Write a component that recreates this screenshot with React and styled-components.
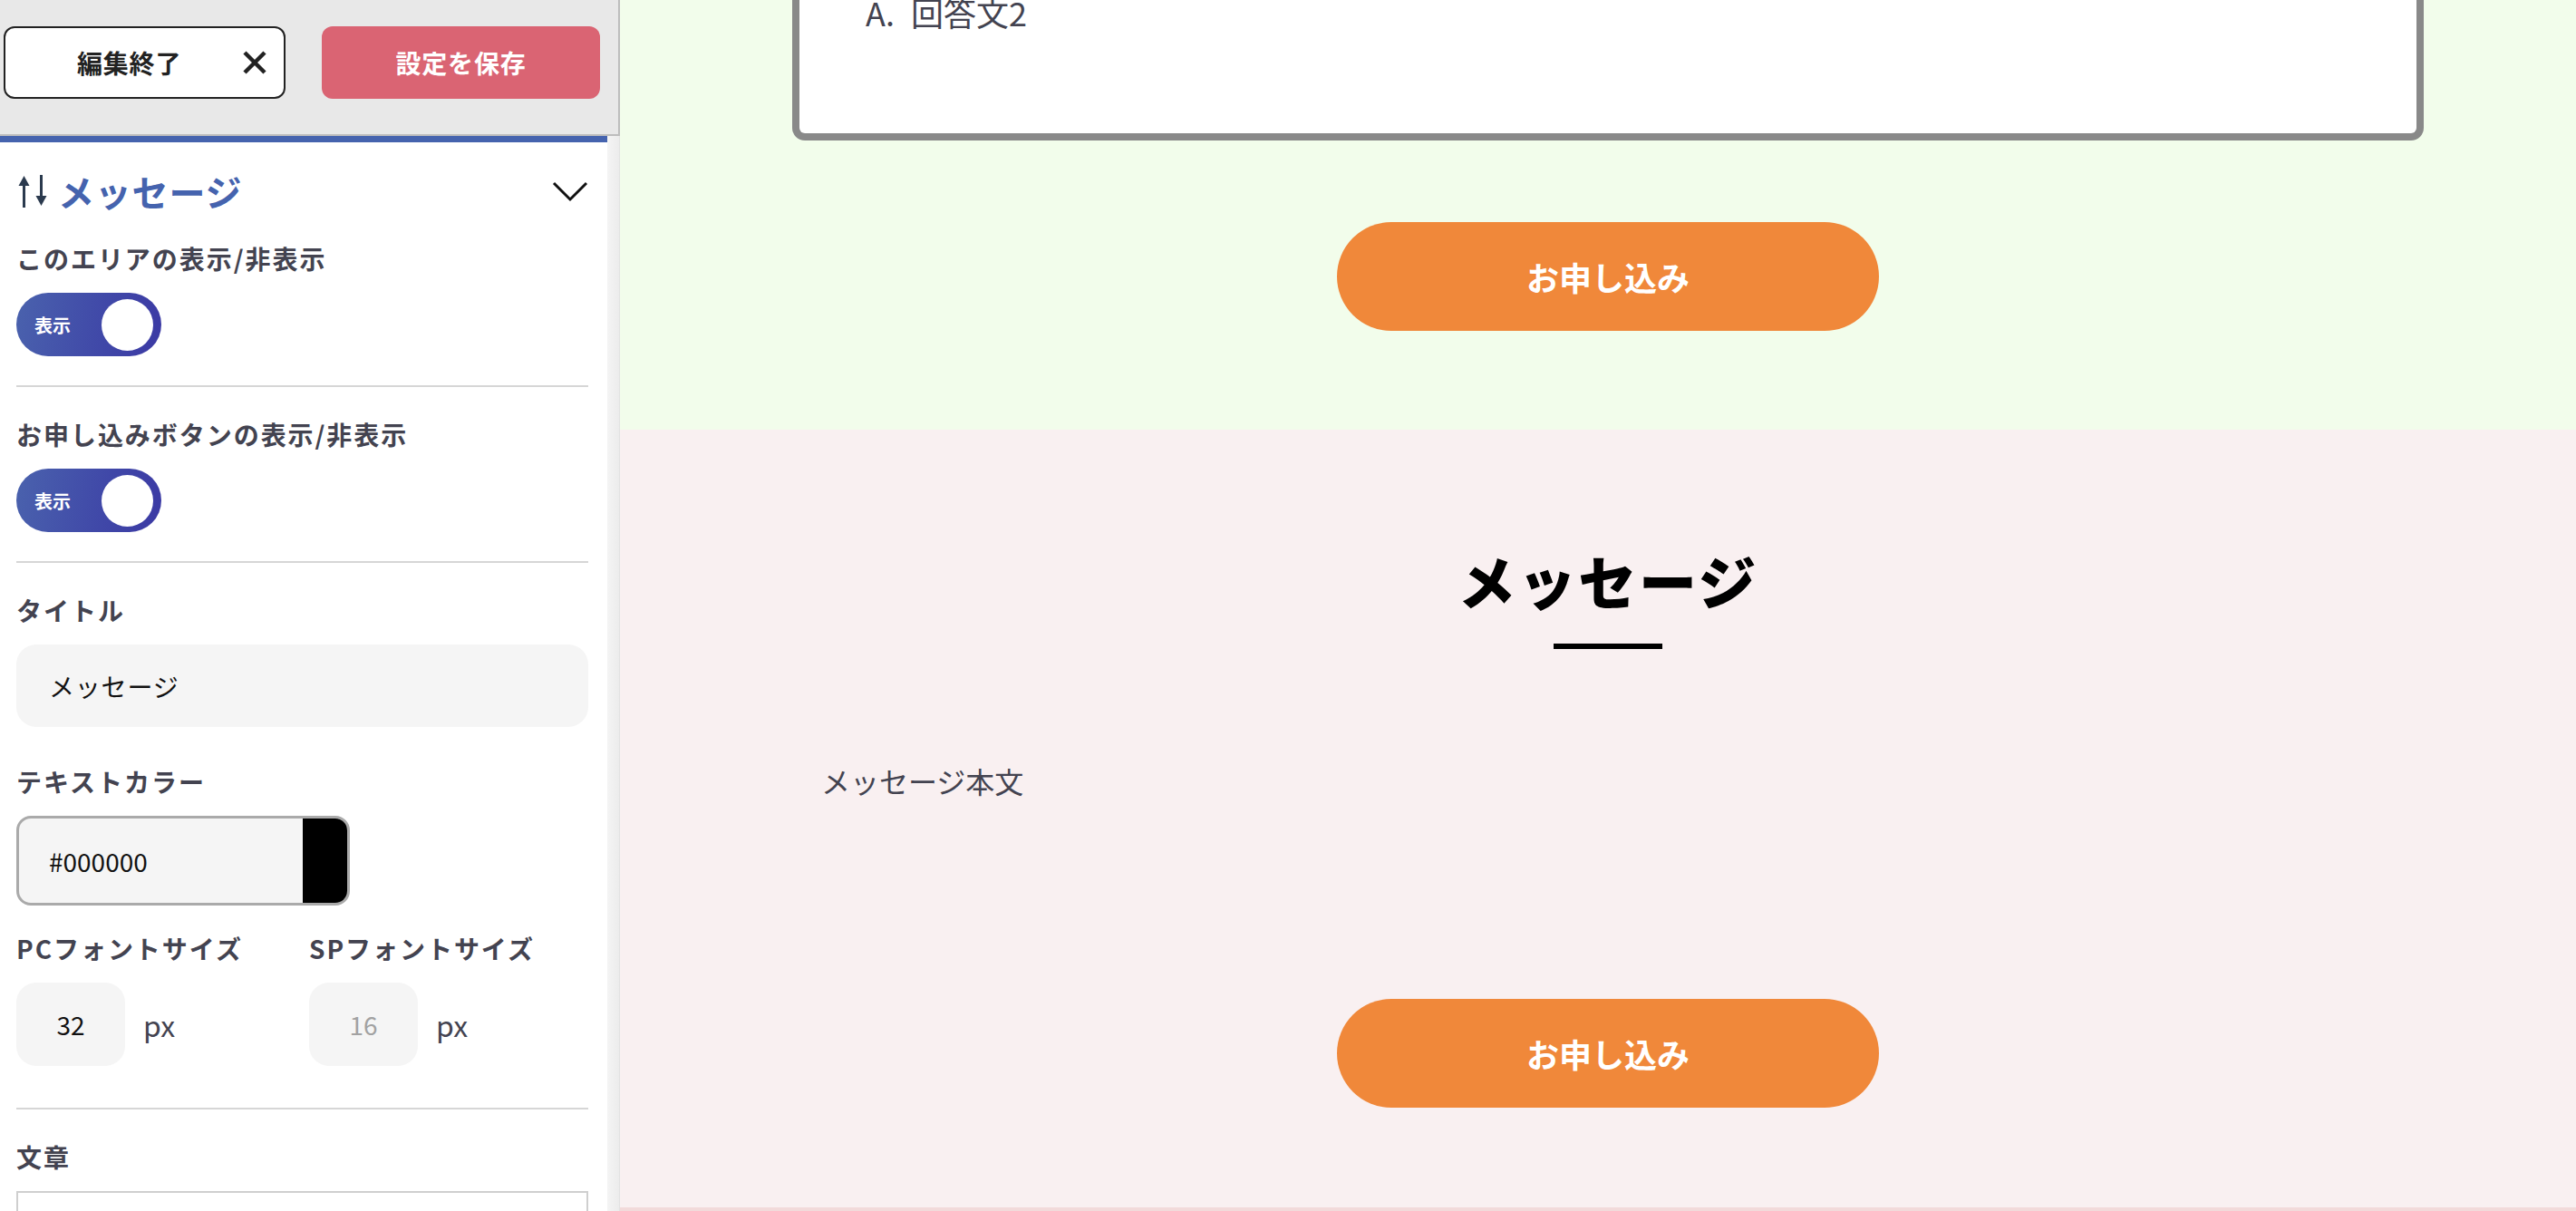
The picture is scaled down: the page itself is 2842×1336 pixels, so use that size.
import React from 'react';
import styled, { createGlobalStyle } from 'styled-components';

const GlobalStyle = createGlobalStyle`
  html, body {
    margin: 0;
    padding: 0;
    overflow: hidden;
  }

  body {
    font-family: "Noto Sans CJK JP", "Noto Sans", sans-serif;
    color: #434350;
  }

  * {
    box-sizing: border-box;
  }
`

const Layout = styled.div`
  display: flex;
  width: 100vw;
  height: 100vh;
  overflow: hidden;
`

// 左側：編集パネル
const Sidebar = styled.aside`
  display: flex;
  flex-direction: column;
  flex: 0 0 684px;
  height: 100%;
  letter-spacing: 0.05em;
  background-color: #fff;
`

const EditorHeader = styled.div`
  display: flex;
  align-items: flex-start;
  gap: 40px;
  height: 150px;
  padding: 29px 20px 0 4px;
  background-color: #e8e8e8;
  border-right: 2px solid #bdbdbd;
  border-bottom: 2px solid #bdbdbd;
`

const CloseButton = styled.button`
  display: flex;
  justify-content: space-between;
  align-items: center;
  width: 311px;
  height: 80px;
  padding: 0 18px 0 79px;
  color: #222;
  font-family: inherit;
  font-size: 28px;
  font-weight: 700;
  letter-spacing: inherit;
  background-color: #fff;
  border: 2px solid #222;
  border-radius: 12px;
`

const SaveButton = styled.button`
  width: 307px;
  height: 80px;
  color: #fff;
  font-family: inherit;
  font-size: 28px;
  font-weight: 700;
  letter-spacing: inherit;
  background-color: #da6473;
  border: none;
  border-radius: 12px;
`

const EditorBody = styled.div`
  display: flex;
  flex: 1;
  min-height: 0;
`

const Panel = styled.div`
  width: 670px;
  padding: 0 21px 0 18px;
  border-top: 7px solid #4563ae;
  overflow: hidden;
`

const ScrollTrack = styled.div`
  flex: 0 0 14px;
  background: linear-gradient(to right, #f4f4f4, #ececec);
  border-right: 1px solid #e2e2e2;
`

const SectionHead = styled.div`
  display: flex;
  justify-content: space-between;
  align-items: center;
  height: 80px;
  margin-top: 14px;
`

const SectionName = styled.h2`
  display: flex;
  align-items: center;
  gap: 10px;
  margin: 0;
  color: #4563ae;
  font-size: 40px;
  font-weight: 700;
  line-height: 1;
`

const Field = styled.div`
  display: flex;
  flex-direction: column;
  gap: 18px;
  margin-top: ${(props) => props.$space || 0}px;
`

const Label = styled.div`
  color: #434350;
  font-size: 28px;
  font-weight: 700;
  letter-spacing: 0.07em;
  line-height: 40px;
`

const Divider = styled.hr`
  height: 2px;
  margin: ${(props) => props.$top || 32}px 0 32px;
  border: none;
  background-color: #d6d6d6;
`

const ToggleTrack = styled.div`
  display: flex;
  justify-content: space-between;
  align-items: center;
  width: 160px;
  height: 70px;
  padding: 0 9px 0 20px;
  color: #fff;
  font-size: 20px;
  font-weight: 700;
  letter-spacing: 0;
  border-radius: 35px;
  background: linear-gradient(100deg, #4a62ad 0%, #4048a8 60%, #3b39a4 100%);
`

const ToggleKnob = styled.span`
  width: 57px;
  height: 57px;
  border-radius: 50%;
  background-color: #fff;
`

const TextInput = styled.div`
  display: flex;
  align-items: center;
  height: 91px;
  padding-left: 36px;
  color: #111;
  font-size: 28px;
  background-color: #f5f5f5;
  border-radius: 22px;
`

const ColorInput = styled.div`
  display: flex;
  width: 368px;
  height: 99px;
  overflow: hidden;
  background-color: #f5f5f5;
  border: 3px solid #aaa;
  border-radius: 16px;
`

const ColorValue = styled.div`
  display: flex;
  flex: 1;
  align-items: center;
  padding-left: 33px;
  color: #111;
  font-size: 28px;
  letter-spacing: 0;
`

const Swatch = styled.div`
  flex: 0 0 49px;
  background-color: ${(props) => props.$color};
`

const SizeGrid = styled.div`
  display: grid;
  grid-template-columns: 323px 1fr;
  margin-top: 27px;
`

const UnitRow = styled.div`
  display: flex;
  align-items: center;
  gap: 20px;
  color: #434350;
  font-size: 32px;
  letter-spacing: 0;
`

const NumberBox = styled.div`
  display: flex;
  justify-content: center;
  align-items: center;
  width: 120px;
  height: 92px;
  color: ${(props) => (props.$disabled ? '#a2a2a2' : '#111')};
  font-size: 28px;
  background-color: #f5f5f5;
  border-radius: 22px;
`

const TextArea = styled.div`
  height: 220px;
  background-color: #fff;
  border: 2px solid #cfcfcf;
`

// 右側：プレビュー
const Preview = styled.main`
  flex: 1;
  height: 100%;
  overflow: hidden;
  box-shadow: inset 6px 0 6px -4px rgba(0, 0, 0, 0.08);
`

const Section = styled.section`
  display: flex;
  flex-direction: column;
  align-items: center;
  padding: ${(props) => props.$pt}px 0 ${(props) => props.$pb}px 22px;
  background-color: ${(props) => props.$bg};
`

const Card = styled.div`
  width: 1800px;
  height: 155px;
  padding: 0 73px;
  background-color: #fff;
  border: 8px solid #898989;
  border-top: none;
  border-radius: 0 0 14px 14px;
`

const Answer = styled.p`
  margin: 0;
  color: #434350;
  font-size: 36px;
  line-height: 34px;
  transform: translateY(-4px);
`

const AnswerMark = styled.span`
  margin-right: 18px;
`

const ApplyButton = styled.button`
  width: 598px;
  height: 120px;
  margin-top: ${(props) => props.$space}px;
  color: #fff;
  font-family: inherit;
  font-size: 36px;
  font-weight: 700;
  background-color: #f0883a;
  border: none;
  border-radius: 60px;
`

const MessageTitle = styled.h2`
  margin: 0;
  color: #000;
  font-size: 64px;
  font-weight: 900;
  letter-spacing: 0.04em;
  line-height: 96px;
`

const TitleBar = styled.span`
  width: 120px;
  height: 6px;
  margin-top: 23px;
  background-color: #000;
`

const MessageBody = styled.p`
  width: 1800px;
  margin: 123px 0 0;
  padding-left: 32px;
  color: #434350;
  font-size: 32px;
  line-height: 44px;
`

const BottomStrip = styled.div`
  height: 4px;
  background-color: #f2dada;
`

const SortIcon = () => (
  <svg width="36" height="36" viewBox="0 0 36 36">
    <path d="M8.5 10v26" stroke="#2b3a4e" strokeWidth="3" />
    <path d="M2.5 12L8.5 1l6 11z" fill="#2b3a4e" />
    <path d="M27.5 0v25" stroke="#2b3a4e" strokeWidth="3" />
    <path d="M21.5 23l6 11 6-11z" fill="#2b3a4e" />
  </svg>
);

const Chevron = () => (
  <svg width="40" height="24" viewBox="0 0 40 24">
    <path d="M2 3l18 18L38 3" fill="none" stroke="#111" strokeWidth="3" />
  </svg>
);

const Cross = () => (
  <svg width="28" height="28" viewBox="0 0 28 28">
    <path d="M3 3l22 22M25 3L3 25" stroke="#222" strokeWidth="4.5" />
  </svg>
);

const Toggle = ({ label }) => (
  <ToggleTrack>
    {label}
    <ToggleKnob />
  </ToggleTrack>
);

const App = () => (
  <Layout>
    <GlobalStyle />
    <Sidebar>
      <EditorHeader>
        <CloseButton>
          編集終了
          <Cross />
        </CloseButton>
        <SaveButton>設定を保存</SaveButton>
      </EditorHeader>
      <EditorBody>
        <Panel>
          <SectionHead>
            <SectionName>
              <SortIcon />
              メッセージ
            </SectionName>
            <Chevron />
          </SectionHead>

          <Field $space={14}>
            <Label>このエリアの表示/非表示</Label>
            <Toggle label="表示" />
          </Field>
          <Divider />
          <Field>
            <Label>お申し込みボタンの表示/非表示</Label>
            <Toggle label="表示" />
          </Field>
          <Divider />
          <Field>
            <Label>タイトル</Label>
            <TextInput>メッセージ</TextInput>
          </Field>
          <Field $space={40}>
            <Label>テキストカラー</Label>
            <ColorInput>
              <ColorValue>#000000</ColorValue>
              <Swatch $color="#000" />
            </ColorInput>
          </Field>
          <SizeGrid>
            <Field>
              <Label>PCフォントサイズ</Label>
              <UnitRow>
                <NumberBox>32</NumberBox>
                px
              </UnitRow>
            </Field>
            <Field>
              <Label>SPフォントサイズ</Label>
              <UnitRow>
                <NumberBox $disabled>16</NumberBox>
                px
              </UnitRow>
            </Field>
          </SizeGrid>
          <Divider $top={46} />
          <Field>
            <Label>文章</Label>
            <TextArea />
          </Field>
        </Panel>
        <ScrollTrack />
      </EditorBody>
    </Sidebar>

    <Preview>
      <Section $bg="#f2fdeb" $pt={0} $pb={109}>
        <Card>
          <Answer>
            <AnswerMark>A.</AnswerMark>回答文2
          </Answer>
        </Card>
        <ApplyButton $space={90}>お申し込み</ApplyButton>
      </Section>
      <Section $bg="#f9f0f1" $pt={117} $pb={110}>
        <MessageTitle>メッセージ</MessageTitle>
        <TitleBar />
        <MessageBody>メッセージ本文</MessageBody>
        <ApplyButton $space={219}>お申し込み</ApplyButton>
      </Section>
      <BottomStrip />
    </Preview>
  </Layout>
);

export default App;
